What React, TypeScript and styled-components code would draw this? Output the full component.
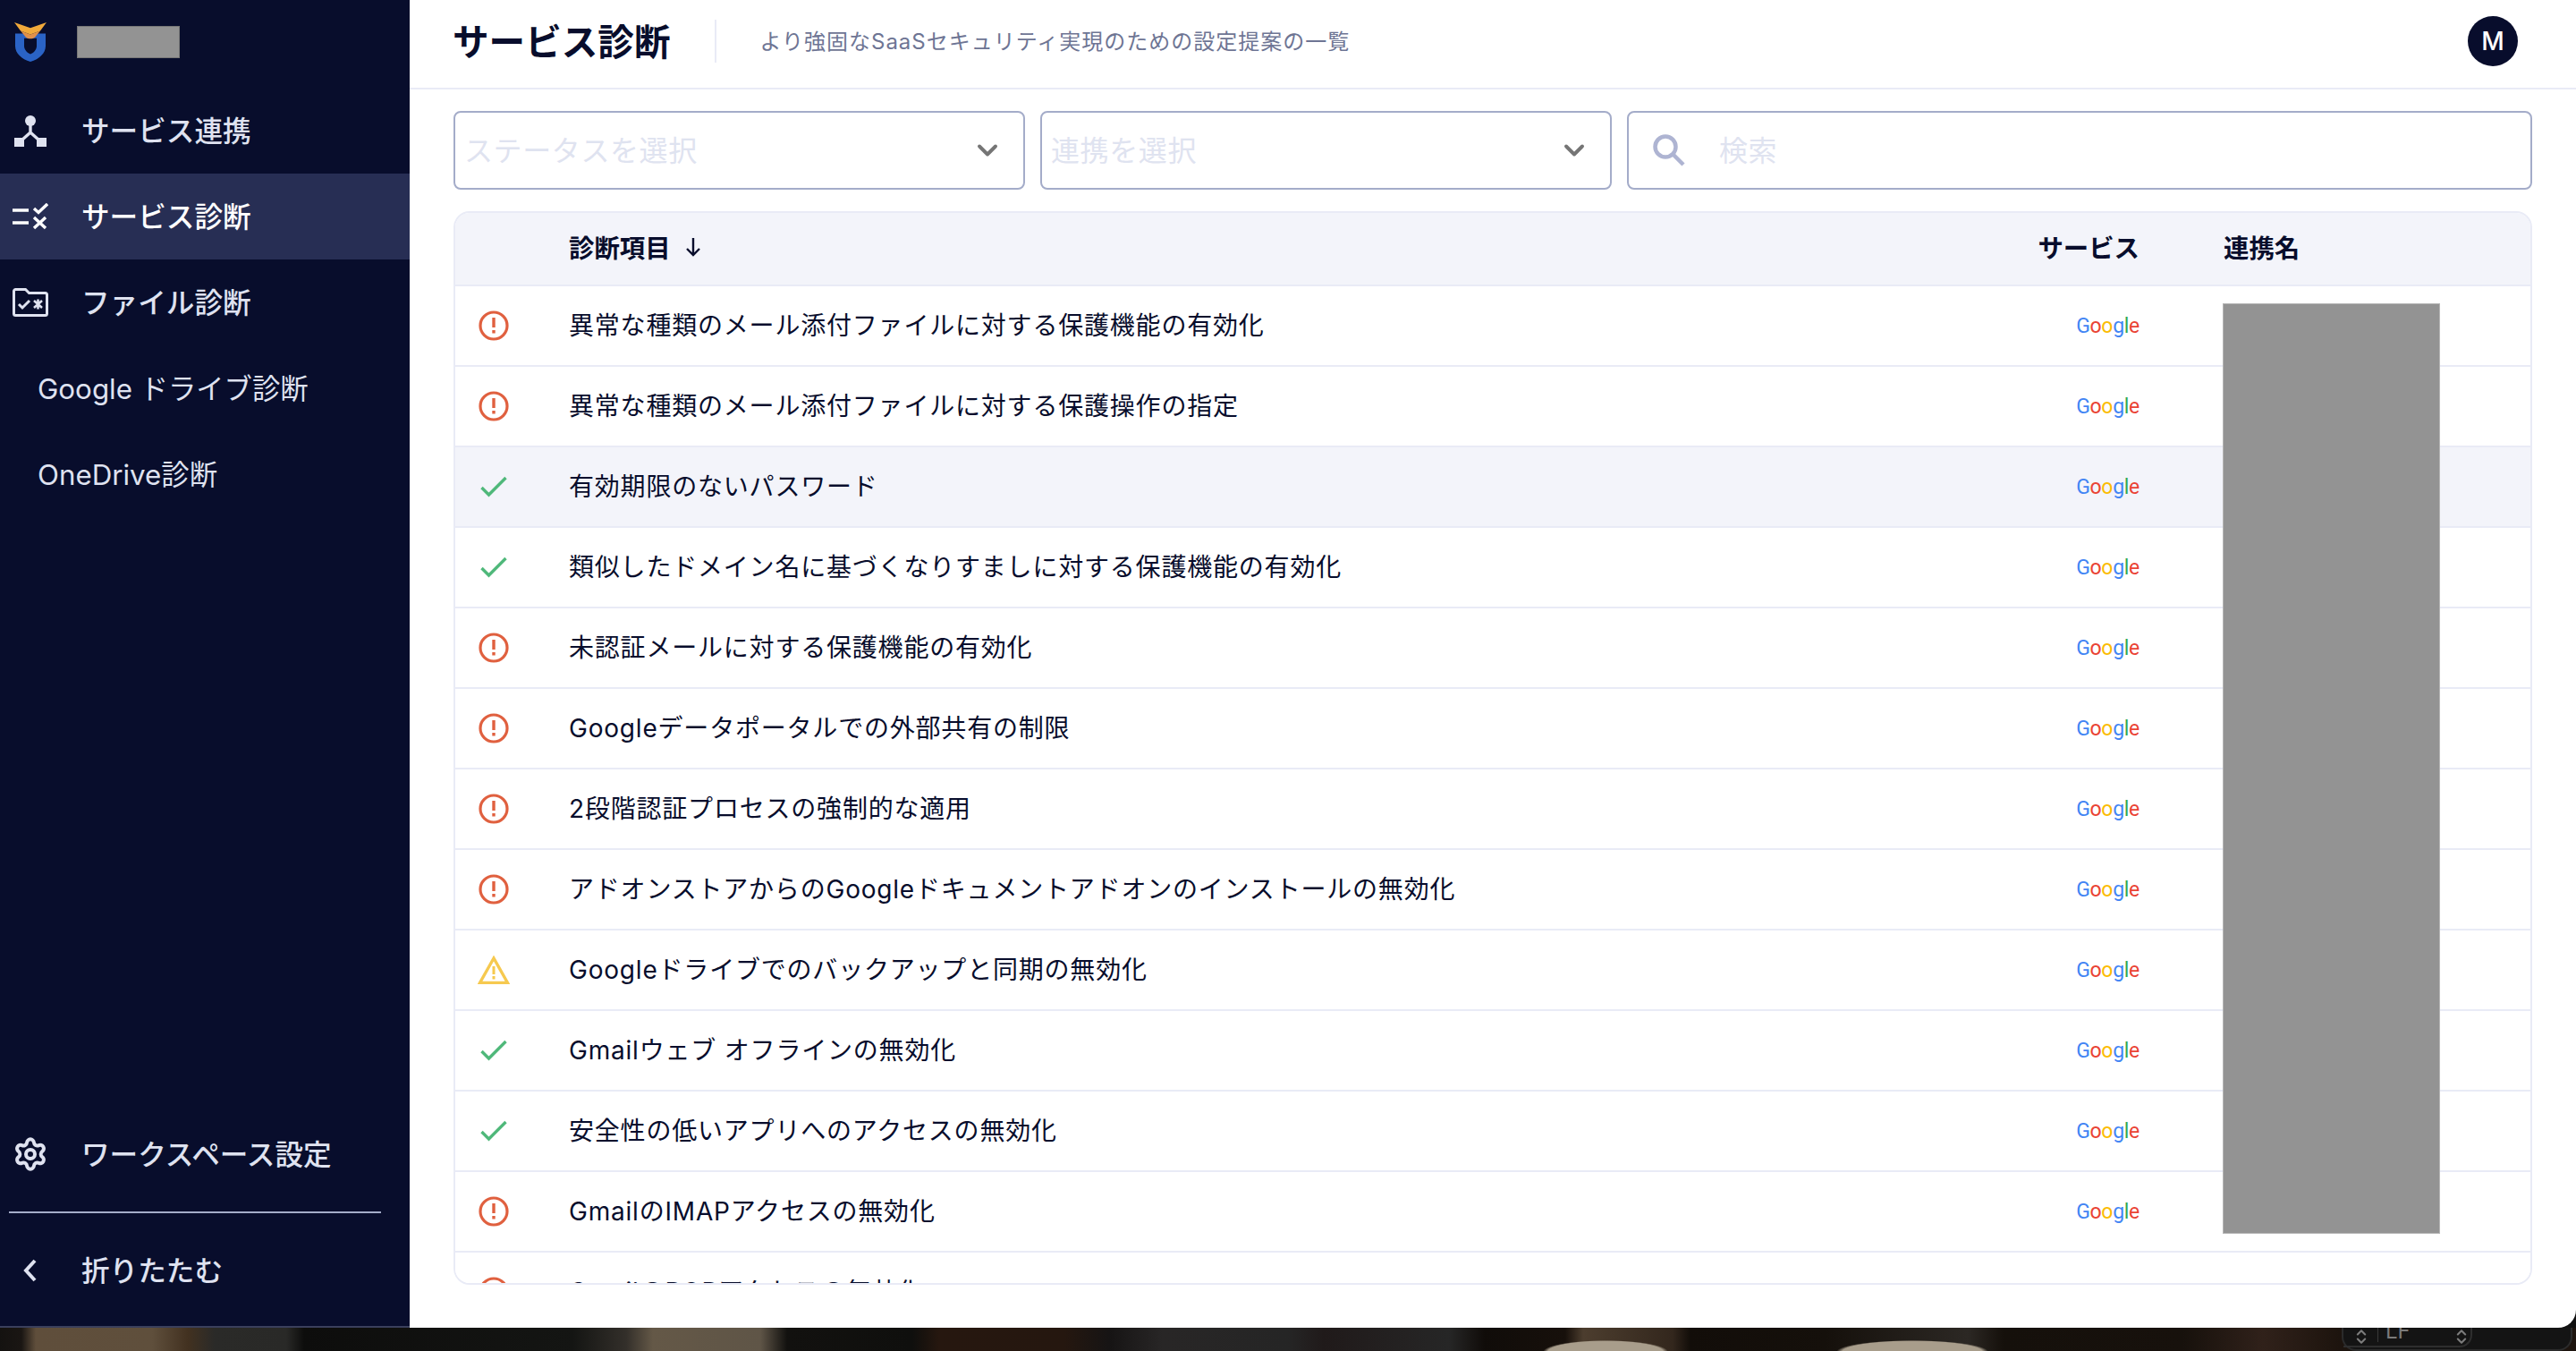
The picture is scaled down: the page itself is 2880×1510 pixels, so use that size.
import React from 'react';
import styled, {createGlobalStyle} from 'styled-components';
import {ChevronDown, ChevronsUpDown, Settings} from 'lucide-react';

type Status = 'alert' | 'ok' | 'warn';

const rows: {status: Status; title: string; active?: boolean}[] = [
    {status: 'alert', title: '異常な種類のメール添付ファイルに対する保護機能の有効化'},
    {status: 'alert', title: '異常な種類のメール添付ファイルに対する保護操作の指定'},
    {status: 'ok', title: '有効期限のないパスワード', active: true},
    {status: 'ok', title: '類似したドメイン名に基づくなりすましに対する保護機能の有効化'},
    {status: 'alert', title: '未認証メールに対する保護機能の有効化'},
    {status: 'alert', title: 'Googleデータポータルでの外部共有の制限'},
    {status: 'alert', title: '2段階認証プロセスの強制的な適用'},
    {status: 'alert', title: 'アドオンストアからのGoogleドキュメントアドオンのインストールの無効化'},
    {status: 'warn', title: 'Googleドライブでのバックアップと同期の無効化'},
    {status: 'ok', title: 'Gmailウェブ オフラインの無効化'},
    {status: 'ok', title: '安全性の低いアプリへのアクセスの無効化'},
    {status: 'alert', title: 'GmailのIMAPアクセスの無効化'},
    {status: 'alert', title: 'GmailのPOPアクセスの無効化'},
];

const GlobalStyle = createGlobalStyle`
    html, body {
        margin: 0;
        background: #111;
        overflow: hidden;
    }
    * {
        box-sizing: border-box;
    }
    body {
        font-family: Inter, "Noto Sans CJK JP", sans-serif;
    }
`;

const Screen = styled.div`
    width: 2880px;
    height: 1510px;
    display: flex;
    flex-direction: column;
    background: #111;
`;

const Window = styled.div`
    height: 1484px;
    display: flex;
    background: #fff;
    border-radius: 0 0 20px 0;
    overflow: hidden;
`;

// Sidebar
const Sidebar = styled.aside`
    width: 458px;
    flex-shrink: 0;
    display: flex;
    flex-direction: column;
    background: #080d2c;
    border-bottom: 2px solid #3a3f5c;
`;

const LogoRow = styled.div`
    height: 98px;
    display: flex;
    align-items: center;
    padding: 0 0 4px 16px;
    gap: 34px;
`;

const Redacted = styled.div`
    width: 115px;
    height: 36px;
    background: #939393;
    border: 1px solid #777;
`;

const NavItem = styled.div<{$active?: boolean}>`
    height: 96px;
    display: flex;
    align-items: center;
    padding-left: 14px;
    gap: 37px;
    font-size: 31.600px;
    font-weight: 500;
    color: ${p => (p.$active ? '#fff' : '#dfe2f0')};
    background: ${p => (p.$active ? '#272e54' : 'transparent')};
`;

const NavLabel = styled.span`
    padding-bottom: 5px;
`;

const SubItem = styled.div`
    height: 96px;
    display: flex;
    align-items: center;
    padding: 0 0 3px 42px;
    font-size: 31.300px;
    color: #dfe2f0;
`;

const IconBox = styled.span`
    width: 40px;
    height: 40px;
    display: flex;
    align-items: center;
    justify-content: center;
    flex-shrink: 0;
`;

const SidebarBottom = styled.div`
    margin-top: auto;
    padding-bottom: 14px;
`;

const SideDivider = styled.div`
    height: 2px;
    width: 416px;
    margin: 16px 0 16px 10px;
    background: #a4acc9;
`;

// Main column
const Main = styled.main`
    flex: 1;
    min-width: 0;
    display: flex;
    flex-direction: column;
`;

const Header = styled.header`
    height: 100px;
    flex-shrink: 0;
    display: flex;
    align-items: center;
    padding: 0 49px 6px;
    border-bottom: 2px solid #e9ebf6;
`;

const Title = styled.h1`
    margin: 0 0 0 -1px;
    font-size: 40.600px;
    font-weight: 700;
    color: #080d2c;
    padding: 0 50px 3px 0;
`;

const HeaderRule = styled.span`
    width: 2px;
    height: 48px;
    background: #e9ebf6;
`;

const Subtitle = styled.span`
    margin-left: 48px;
    padding-bottom: 3px;
    font-size: 24px;
    letter-spacing: 1px;
    color: #6e7594;
`;

const Avatar = styled.div`
    margin-left: auto;
    margin-right: 16px;
    width: 56px;
    height: 56px;
    border-radius: 50%;
    background: #080d2c;
    color: #fff;
    display: flex;
    align-items: center;
    justify-content: center;
    font-size: 28px;
    font-weight: 500;
`;

const Content = styled.div`
    flex: 1;
    padding: 24px 49px 0;
`;

const Filters = styled.div`
    display: grid;
    grid-template-columns: 639px 639px 1fr;
    gap: 17px;
    margin-bottom: 24px;
`;

const Field = styled.div`
    height: 88px;
    display: flex;
    align-items: center;
    padding: 0 22px 0 10px;
    border: 2px solid #a4acc9;
    border-radius: 8px;
    background: #fff;
`;

const SearchField = styled(Field)`
    padding: 0 0 0 27px;
    gap: 38px;
`;

const Placeholder = styled.span`
    flex: 1;
    padding-bottom: 4px;
    font-size: 32px;
    letter-spacing: 0.6px;
    color: #dfe3f0;
`;

// Table
const TableWrap = styled.div`
    position: relative;
    height: 1200px;
    border: 2px solid #e9ebf6;
    border-radius: 18px;
    overflow: hidden;
`;

const columns = '127px 1fr 200px 437px';

const HeadRow = styled.div`
    height: 82px;
    display: grid;
    grid-template-columns: ${columns};
    align-items: center;
    background: #f3f4fa;
    border-bottom: 2px solid #e9ebf6;
    font-size: 28.400px;
    font-weight: 700;
    color: #080d2c;
`;

const Row = styled.div<{$active?: boolean}>`
    height: 90px;
    display: grid;
    grid-template-columns: ${columns};
    align-items: center;
    background: ${p => (p.$active ? '#f3f4fa' : '#fff')};
    border-bottom: 2px solid #e9ebf6;
    font-size: 28px;
    letter-spacing: 0.800px;
    color: #080d2c;
`;

const StatusCell = styled.div`
    display: flex;
    justify-content: center;
    padding-right: 41px;
`;

const TitleCell = styled.div`
    padding-bottom: 5px;
`;

const HeadTitle = styled.div`
    grid-column: 2;
    display: flex;
    align-items: center;
    gap: 16px;
    padding-bottom: 5px;
`;

const ServiceCell = styled.div`
    text-align: right;
    padding-bottom: 5px;
`;

const NameCell = styled.div`
    padding: 0 0 5px 94px;
`;

const GoogleLogo = styled.span`
    display: inline-block;
    padding-bottom: 3px;
    font-family: Roboto, sans-serif;
    font-size: 23px;
    line-height: 1;
    letter-spacing: -0.3px;
`;

const Letter = styled.span<{$color: string}>`
    color: ${p => p.$color};
`;

const NameMask = styled.div`
    position: absolute;
    left: 1976px;
    top: 101px;
    width: 243px;
    height: 1040px;
    background: #939393;
    border: 1px solid #b5b5b5;
`;

// The desktop showing under the window
const Desktop = styled.div`
    height: 26px;
    display: flex;
    justify-content: flex-end;
    overflow: hidden;
    background:
        radial-gradient(ellipse 85px 13px at 2138px 27px, #a89d8b 92%, transparent 100%),
        radial-gradient(ellipse 70px 13px at 1795px 27px, #a89d8b 92%, transparent 100%),
        linear-gradient(90deg,
            #141210 0, #1a1613 24px, #5f4e3b 40px, #5f4f3c 170px, #423120 210px,
            #2a2a28 240px, #292927 320px, #0d0d0c 340px, #141513 640px,
            #332f2a 700px, #645847 730px, #5f5547 850px, #12110f 880px, #0f0f0d 1020px,
            #26170f 1050px, #25170f 1190px, #161414 1240px, #282626 1300px, #252525 1440px,
            #201a1a 1480px, #262626 1620px, #100c09 1660px, #17100b 1750px,
            #4c3d2e 1770px, #33271d 1870px, #120d09 1890px, #15100b 2040px,
            #2c2824 2200px, #15100b 2240px, #17110c 2440px, #30211a 2530px, #1d140e 2615px);
`;

const StatusPanel = styled.div`
    width: 258px;
    margin-right: 4px;
    background: #141414;
    border-radius: 0 0 16px 16px;
    border: solid #2b2b2b;
    border-width: 0 2px 2px 2px;
`;

const StatusInner = styled.div`
    width: 144px;
    height: 22px;
    display: flex;
    align-items: flex-start;
    color: #7b7b7b;
    border: solid #2e2e2e;
    border-width: 0 2px 2px 0;
    border-radius: 0 0 14px 0;
    padding-left: 10px;
    overflow: hidden;
`;

const StatusText = styled.span`
    font-family: Inter, sans-serif;
    font-size: 24px;
    line-height: 24px;
    margin: -8px auto 0 8px;
    padding-left: 8px;
    border-left: 1px solid #3a3a3a;
`;

function LogoMark() {
    return (
        <svg width="36" height="44" viewBox="0 0 36 42" preserveAspectRatio="none">
            <path d="M1 12h9c2 3 5 4 8 4s6-1 8-4h9v13c0 8-7 14-17 17C8 39 1 33 1 25z" fill="#2a63c6"/>
            <path d="M11 17h14v8c0 4-3 7-7 9-4-2-7-5-7-9z" fill="#080d2c"/>
            <path d="M7 9l11 4 11-4-6 7c-3 2-7 2-10 0z" fill="#e0904a"/>
            <path d="M0 0l18 6 18-6-7 9-11 4L7 9z" fill="#f0a93b"/>
        </svg>
    );
}

function ConnectIcon() {
    return (
        <svg width="36" height="35" viewBox="0 0 36 35">
            <circle cx="18" cy="6" r="6" fill="currentColor"/>
            <path d="M18 10v9M18 19L8 28M18 19l10 9" stroke="currentColor" strokeWidth="3.400" fill="none"/>
            <path d="M0 25h11v10H0zM25 25h11v10H25z" fill="currentColor"/>
        </svg>
    );
}

function ChecklistIcon() {
    return (
        <svg width="40" height="30" viewBox="0 0 40 30">
            <path d="M0 8h18M0 22h18" stroke="currentColor" strokeWidth="3.400"/>
            <path d="M24 6l5 4.500L39 1" stroke="currentColor" strokeWidth="3.400" fill="none"/>
            <path d="M24 16l13 12M37 16L24 28" stroke="currentColor" strokeWidth="3.400" fill="none"/>
        </svg>
    );
}

function FolderIcon() {
    return (
        <svg width="40" height="32" viewBox="0 0 40 32">
            <path d="M1.500 3.500a2 2 0 0 1 2-2h11l4 4h18a2 2 0 0 1 2 2v21a2 2 0 0 1-2 2h-33a2 2 0 0 1-2-2z" stroke="currentColor" strokeWidth="3" fill="none"/>
            <path d="M7 18l4 4 8-8" stroke="currentColor" strokeWidth="3" fill="none"/>
            <path d="M24 14l9 8M33 14l-9 8M28.500 12.500v11" stroke="currentColor" strokeWidth="2.600" fill="none"/>
        </svg>
    );
}

function BackIcon() {
    return (
        <svg width="16" height="26" viewBox="0 0 16 26">
            <path d="M13 2L3 13l10 11" stroke="currentColor" strokeWidth="4" fill="none"/>
        </svg>
    );
}

function SearchIcon() {
    return (
        <svg width="36" height="36" viewBox="0 0 36 36">
            <circle cx="14" cy="14" r="11.500" stroke="#aeb4d2" strokeWidth="4.500" fill="none"/>
            <path d="M22 22l12 12" stroke="#aeb4d2" strokeWidth="4.500"/>
        </svg>
    );
}

function SortArrow() {
    return (
        <svg width="18" height="22" viewBox="0 0 18 22">
            <path d="M9 1v19M2 13l7 7 7-7" stroke="#080d2c" strokeWidth="2.400" fill="none"/>
        </svg>
    );
}

function StatusIcon({status}: {status: Status}) {
    if (status === 'ok') {
        return (
            <svg width="30" height="24" viewBox="0 0 30 24">
                <path d="M1.500 13l8 8L28.500 2" stroke="#4fb87a" strokeWidth="3.400" fill="none"/>
            </svg>
        );
    }
    if (status === 'warn') {
        return (
            <svg width="36" height="32" viewBox="0 0 36 32">
                <path d="M18 3L2.500 30.500h31z" stroke="#f6c94f" strokeWidth="3.400" fill="none"/>
                <path d="M16.500 12h3v9h-3zM16.500 23h3v3.500h-3z" fill="#f6c94f"/>
            </svg>
        );
    }
    return (
        <svg width="34" height="34" viewBox="0 0 34 34">
            <circle cx="17" cy="17" r="15" stroke="#e0603f" strokeWidth="3.200" fill="none"/>
            <path d="M15.300 8h3.400v11h-3.400zM15.300 22h3.400v3.600h-3.400z" fill="#e0603f"/>
        </svg>
    );
}

function Google() {
    return (
        <GoogleLogo>
            <Letter $color="#4285f4">G</Letter>
            <Letter $color="#ea4335">o</Letter>
            <Letter $color="#fbbc05">o</Letter>
            <Letter $color="#4285f4">g</Letter>
            <Letter $color="#34a853">l</Letter>
            <Letter $color="#ea4335">e</Letter>
        </GoogleLogo>
    );
}

export default function App() {
    return (
        <Screen>
            <GlobalStyle/>
            <Window>
                <Sidebar>
                    <LogoRow>
                        <LogoMark/>
                        <Redacted/>
                    </LogoRow>
                    <NavItem><IconBox><ConnectIcon/></IconBox><NavLabel>サービス連携</NavLabel></NavItem>
                    <NavItem $active><IconBox><ChecklistIcon/></IconBox><NavLabel>サービス診断</NavLabel></NavItem>
                    <NavItem><IconBox><FolderIcon/></IconBox><NavLabel>ファイル診断</NavLabel></NavItem>
                    <SubItem>Google ドライブ診断</SubItem>
                    <SubItem>OneDrive診断</SubItem>
                    <SidebarBottom>
                        <NavItem><IconBox><Settings size={40} strokeWidth={2.400}/></IconBox><NavLabel>ワークスペース設定</NavLabel></NavItem>
                        <SideDivider/>
                        <NavItem><IconBox><BackIcon/></IconBox><NavLabel>折りたたむ</NavLabel></NavItem>
                    </SidebarBottom>
                </Sidebar>
                <Main>
                    <Header>
                        <Title>サービス診断</Title>
                        <HeaderRule/>
                        <Subtitle>より強固なSaaSセキュリティ実現のための設定提案の一覧</Subtitle>
                        <Avatar>M</Avatar>
                    </Header>
                    <Content>
                        <Filters>
                            <Field>
                                <Placeholder>ステータスを選択</Placeholder>
                                <ChevronDown size={36} strokeWidth={2.600} color="#757575"/>
                            </Field>
                            <Field>
                                <Placeholder>連携を選択</Placeholder>
                                <ChevronDown size={36} strokeWidth={2.600} color="#757575"/>
                            </Field>
                            <SearchField>
                                <SearchIcon/>
                                <Placeholder>検索</Placeholder>
                            </SearchField>
                        </Filters>
                        <TableWrap>
                            <HeadRow>
                                <HeadTitle>診断項目 <SortArrow/></HeadTitle>
                                <ServiceCell>サービス</ServiceCell>
                                <NameCell>連携名</NameCell>
                            </HeadRow>
                            {rows.map((row, i) => (
                                <Row key={i} $active={row.active}>
                                    <StatusCell><StatusIcon status={row.status}/></StatusCell>
                                    <TitleCell>{row.title}</TitleCell>
                                    <ServiceCell><Google/></ServiceCell>
                                    <NameCell/>
                                </Row>
                            ))}
                            <NameMask/>
                        </TableWrap>
                    </Content>
                </Main>
            </Window>
            <Desktop>
                <StatusPanel>
                    <StatusInner>
                        <ChevronsUpDown size={20} strokeWidth={2.500}/>
                        <StatusText>LF</StatusText>
                        <ChevronsUpDown size={20} strokeWidth={2.500}/>
                    </StatusInner>
                </StatusPanel>
            </Desktop>
        </Screen>
    );
}
